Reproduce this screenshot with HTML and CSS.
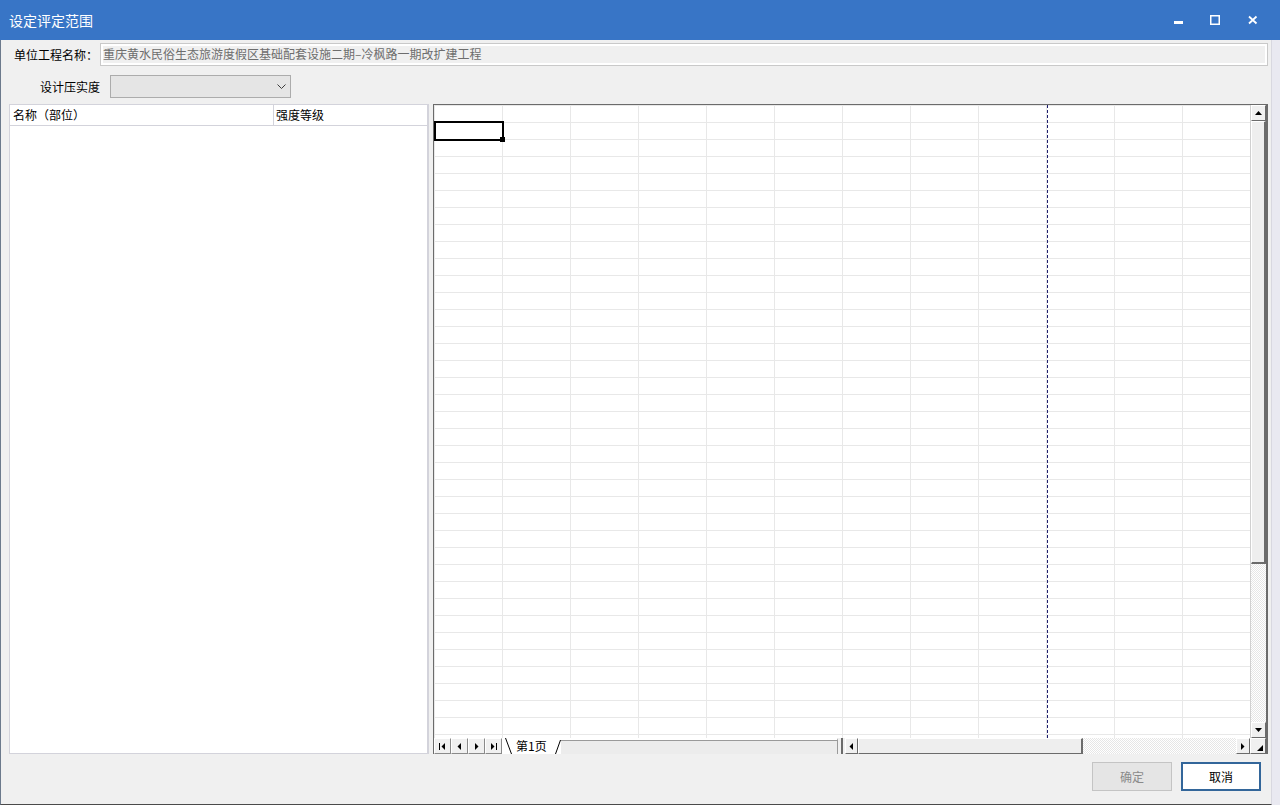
FILE: index.html
```html
<!DOCTYPE html>
<html lang="zh-CN">
<head>
<meta charset="utf-8">
<title>设定评定范围</title>
<link rel="stylesheet" href="styles.css">
</head>
<body>
<div class="window">
  <div class="titlebar">
    <span class="title">设定评定范围</span>
    <div class="controls">
      <span class="ctl ctl-min"><svg width="10" height="10" viewBox="0 0 10 10"><rect x="0" y="5" width="9" height="3" fill="#fff"/></svg></span>
      <span class="ctl ctl-max"><svg width="10" height="10" viewBox="0 0 10 10"><rect x="0.75" y="0.75" width="8.5" height="8.5" fill="none" stroke="#fff" stroke-width="1.5"/></svg></span>
      <span class="ctl ctl-close"><svg width="10" height="10" viewBox="0 0 10 10"><path d="M1 1.5 L8.5 8.5 M8.5 1.5 L1 8.5" stroke="#fff" stroke-width="1.8"/></svg></span>
    </div>
  </div>
  <div class="frame">
    <div class="client">
      <div class="row row-name">
        <span class="lbl lbl-name">单位工程名称：</span>
        <div class="textbox">重庆黄水民俗生态旅游度假区基础配套设施二期–冷枫路一期改扩建工程</div>
      </div>
      <div class="row row-combo">
        <span class="lbl lbl-combo">设计压实度</span>
        <div class="combo">
          <svg class="chev" width="9" height="6" viewBox="0 0 9 6"><polyline points="0.5,0.5 4.5,4.5 8.5,0.5" fill="none" stroke="#3c3c3c" stroke-width="1"/></svg>
        </div>
      </div>
      <div class="main">
        <div class="list">
          <div class="list-head">
            <div class="hcol hcol-name">名称（部位）</div>
            <div class="hcol hcol-grade">强度等级</div>
          </div>
          <div class="list-body"></div>
        </div>
        <div class="sheet">
          <div class="sheet-top">
            <div class="cells">
              <div class="pagebreak"></div>
              <div class="selcell"></div>
              <div class="fillhandle"></div>
            </div>
            <div class="vscroll">
              <div class="sb-btn"><svg width="7" height="4" viewBox="0 0 7 4"><polygon points="3.5,0 7,4 0,4" fill="#000"/></svg></div>
              <div class="vthumb"></div>
              <div class="hatch vtrack"></div>
              <div class="sb-btn"><svg width="7" height="4" viewBox="0 0 7 4"><polygon points="0,0 7,0 3.5,4" fill="#000"/></svg></div>
            </div>
          </div>
          <div class="sheet-bottom">
            <div class="navs">
              <div class="nav"><svg width="7" height="7" viewBox="0 0 7 7"><rect x="0" y="0" width="1" height="7" fill="#000"/><polygon points="6,0 6,7 2.5,3.5" fill="#000"/></svg></div>
              <div class="nav"><svg width="5" height="7" viewBox="0 0 5 7"><polygon points="4,0 4,7 0.5,3.5" fill="#000"/></svg></div>
              <div class="nav"><svg width="5" height="7" viewBox="0 0 5 7"><polygon points="1,0 1,7 4.5,3.5" fill="#000"/></svg></div>
              <div class="nav"><svg width="7" height="7" viewBox="0 0 7 7"><polygon points="1,0 1,7 4.5,3.5" fill="#000"/><rect x="6" y="0" width="1" height="7" fill="#000"/></svg></div>
            </div>
            <div class="tab">
              <svg class="tab-edge" width="59" height="16" viewBox="0 0 59 16"><path d="M3.5 0 L9.5 16 M53.5 16 L58.5 2" stroke="#000" stroke-width="1" fill="none"/></svg>
              <span class="tab-text">第1页</span>
            </div>
            <div class="tabarea"></div>
            <div class="splitter"></div>
            <div class="hscroll">
              <div class="hbtn hbtn-left"><svg width="4" height="7" viewBox="0 0 4 7"><polygon points="4,0 4,7 0.5,3.5" fill="#000"/></svg></div>
              <div class="hthumb"></div>
              <div class="hatch htrack"></div>
              <div class="hbtn hbtn-right"><svg width="4" height="7" viewBox="0 0 4 7"><polygon points="0,0 0,7 3.5,3.5" fill="#000"/></svg></div>
            </div>
            <div class="corner"><svg width="6" height="6" viewBox="0 0 6 6"><polygon points="6,0 6,6 0,6" fill="#000"/></svg></div>
          </div>
        </div>
      </div>
      <div class="footer">
        <button class="btn btn-disabled" disabled>确定</button>
        <button class="btn btn-default">取消</button>
      </div>
    </div>
    <div class="strip"></div>
  </div>
</div>
</body>
</html>
```
FILE: styles.css
```css
* { box-sizing: border-box; margin: 0; padding: 0; }
html, body { width: 1280px; height: 805px; overflow: hidden; }
body {
  font-family: "Noto Sans CJK SC", "Microsoft YaHei", sans-serif;
  font-size: 12px;
  color: #000;
  background: #e9e9f1;
}
.window { width: 1280px; height: 805px; display: flex; flex-direction: column; }

.titlebar {
  flex: none;
  height: 40px;
  background: #3875c6;
  color: #fff;
  display: flex;
  align-items: center;
  padding-left: 9px;
}
.title { flex: 1; font-size: 14px; line-height: 16px; }
.controls { display: flex; height: 40px; margin-right: 7px; }
.ctl { width: 36px; display: flex; align-items: center; justify-content: center; }
.ctl-close { width: 40px; }
.ctl-min svg { margin-top: 1px; }

.frame { flex: 1; display: flex; }
.client {
  width: 1272px;
  background: #f0f0f0;
  border-left: 1px solid #6c7a8c;
  border-right: 1px solid #d8d8e0;
  border-bottom: 1px solid #4a4a4a;
  padding-left: 8px;
  display: flex;
  flex-direction: column;
}
.strip { flex: 1; background: #e9e9f1; }

.row { display: flex; align-items: center; height: 23px; }
.row-name { margin-top: 3px; }
.row-combo { margin-top: 9px; }
.lbl { line-height: 16px; white-space: nowrap; }
.lbl-name { margin-left: 5px; width: 86px; }
.lbl-combo { margin-left: 31px; width: 70px; }

.textbox {
  width: 1168px;
  height: 23px;
  border: 1px solid #c9c9c9;
  box-shadow: inset 0 0 0 2px #fff;
  background: #f0f0f0;
  color: #6d6d6d;
  padding-left: 2px;
  line-height: 20px;
  white-space: nowrap;
}

.combo {
  width: 181px;
  height: 23px;
  background: #e5e5e5;
  border: 1px solid #acacac;
  display: flex;
  align-items: center;
  justify-content: flex-end;
  padding-right: 4px;
}

.main { margin-top: 6px; height: 650px; display: flex; gap: 4px; }

.list {
  width: 420px;
  height: 650px;
  background: #fff;
  border: 1px solid #d3d3db;
  border-right-width: 2px;
  display: flex;
  flex-direction: column;
}
.list-head { display: flex; height: 21px; border-bottom: 1px solid #d3d3db; }
.hcol { line-height: 20px; white-space: nowrap; }
.hcol-name { width: 264px; padding-left: 3px; border-right: 1px solid #d3d3db; }
.hcol-grade { flex: 1; padding-left: 2px; }
.list-body { flex: 1; }

.sheet {
  width: 835px;
  height: 650px;
  border-top: 1px solid #6b6b6b;
  border-left: 1px solid #6b6b6b;
  border-right: 2px solid #6b6b6b;
  background: #fff;
  display: flex;
  flex-direction: column;
}
.sheet-top { height: 633px; display: flex; }
.cells {
  width: 816px;
  position: relative;
  background-color: #fff;
  background-image:
    linear-gradient(to right, #e8e8e8 1px, transparent 1px),
    linear-gradient(to bottom, #e8e8e8 1px, transparent 1px);
  background-size: 68px 17px;
}
.pagebreak {
  position: absolute;
  left: 613px;
  top: 0;
  bottom: 0;
  width: 1px;
  background: repeating-linear-gradient(to bottom, #1e1e6e 0 3px, transparent 3px 5px);
}
.selcell {
  position: absolute;
  left: 0;
  top: 16px;
  width: 70px;
  height: 20px;
  border: 2px solid #000;
}
.fillhandle {
  position: absolute;
  left: 66px;
  top: 32px;
  width: 5px;
  height: 5px;
  background: #000;
}

.vscroll {
  width: 16px;
  display: flex;
  flex-direction: column;
  background: #f0f0f0;
  border-left: 1px solid #d0d0d0;
}
.sb-btn {
  height: 16px;
  flex: none;
  background: #f0f0f0;
  border: 1px solid;
  border-color: #fff #6b6b6b #6b6b6b #fff;
  display: flex;
  align-items: center;
  justify-content: center;
}
.vthumb {
  height: 443px;
  flex: none;
  background: #eeeeee;
  border: 1px solid;
  border-color: #fff #6b6b6b #6b6b6b #fff;
  border-right-width: 2px;
  border-bottom-width: 2px;
}
.hatch {
  background-color: #fff;
  background-image: repeating-conic-gradient(#e6e6e6 0 25%, #ffffff 0 50%);
  background-size: 2px 2px;
}
.vtrack { flex: 1; }

.sheet-bottom {
  height: 16px;
  display: flex;
  background: #f0f0f0;
}
.navs { display: flex; width: 68px; }
.nav {
  width: 17px;
  height: 16px;
  border: 1px solid;
  border-color: #fff #8a8a8a #8a8a8a #fff;
  background: #f0f0f0;
  display: flex;
  align-items: center;
  justify-content: center;
}
.tab {
  width: 59px;
  position: relative;
  background: #fff;
}
.tab-edge { position: absolute; left: 0; top: 0; }
.tab-text { position: absolute; left: 14px; top: 0; line-height: 16px; font-size: 12px; }
.tabarea {
  width: 277px;
  background: #ececec;
  border-top: 2px solid #fff;
  box-shadow: inset 0 1px 0 #9a9a9a;
  border-right: 1px solid #9a9a9a;
}
.splitter {
  width: 7px;
  border-left: 3px solid #f0f0f0;
  border-right: 2px solid #f0f0f0;
  background-color: #6b6b6b;
}
.hscroll { width: 406px; display: flex; }
.hbtn {
  height: 16px;
  background: #f0f0f0;
  border: 1px solid;
  border-color: #fff #6b6b6b #6b6b6b #fff;
  display: flex;
  align-items: center;
  justify-content: center;
}
.hbtn-left { width: 13px; }
.hbtn-right { width: 14px; }
.hthumb {
  width: 225px;
  background: #eeeeee;
  border: 1px solid;
  border-color: #fff #6b6b6b #6b6b6b #fff;
  border-right-width: 2px;
}
.htrack { flex: 1; }
.corner {
  width: 16px;
  background: #f0f0f0;
  border: 1px solid;
  border-color: #fff #6b6b6b #6b6b6b #fff;
  display: flex;
  align-items: flex-end;
  justify-content: flex-end;
  padding: 0 2px 2px 0;
}

.footer {
  margin-top: 8px;
  display: flex;
  justify-content: flex-end;
  gap: 9px;
  padding-right: 10px;
}
.btn {
  width: 80px;
  height: 29px;
  font-family: "Noto Sans CJK SC", "Microsoft YaHei", sans-serif;
  font-size: 12px;
  line-height: 16px;
}
.btn-disabled {
  background: #e5e5e5;
  border: 1px solid #c4c4c4;
  color: #8a8a8a;
}
.btn-default {
  background: #fff;
  border: 2px solid #33669a;
  color: #000;
}
```
